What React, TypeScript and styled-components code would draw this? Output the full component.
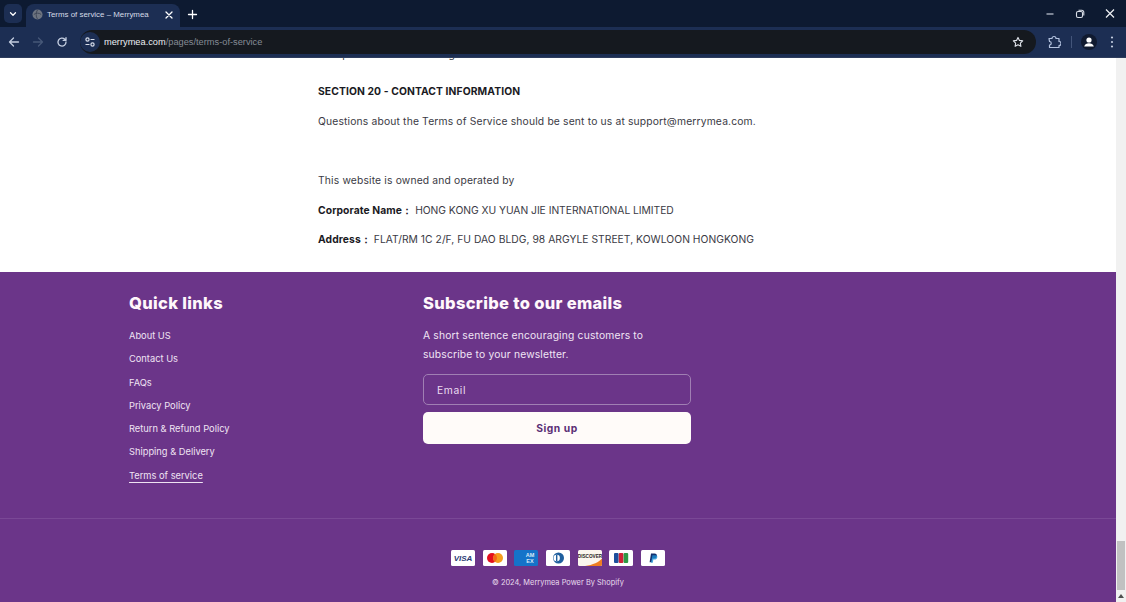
import React from "react";
import styled, { createGlobalStyle } from "styled-components";

const Global = createGlobalStyle`
  html, body { margin: 0; padding: 0; background: #fff; }
  body { font-family: "Inter", "Liberation Sans", sans-serif; overflow: hidden; }
  * { box-sizing: border-box; }
`;

const Frame = styled.div`
  width: 1126px; height: 602px; display: flex; flex-direction: column; overflow: hidden;
`;
const TabStrip = styled.div`
  height: 27px; background: #0d1a31; display: flex; align-items: flex-end; color: #fff; flex: none;
`;
const TabListButton = styled.div`
  width: 18px; height: 19px; margin: 0 4px 4px 4px; border-radius: 5px; background: #1c2e53;
  display: flex; align-items: center; justify-content: center; flex: none;
`;
const Tab = styled.div`
  width: 154px; height: 23px; background: #1c2e53; border-radius: 8px 8px 0 0; display: flex; align-items: center;
  padding: 0 6px 2px 6px; gap: 4px; font: 400 7.9px "Liberation Sans", sans-serif; color: #d5dbe7; flex: none;
`;
const TabTitle = styled.span`flex: 1; white-space: nowrap;`;
const NewTab = styled.div`
  width: 18px; height: 18px; margin: 0 0 4px 3px; display: flex; align-items: center; justify-content: center; flex: none;
`;
const StripSpacer = styled.div`flex: 1;`;
const WindowButtons = styled.div`
  display: flex; align-self: flex-start; height: 27px; align-items: center; padding-right: 8px; gap: 14px;
`;
const Toolbar = styled.div`
  height: 31px; flex: none; background: #1c2e53; display: flex; align-items: center; padding: 0 3px 0 2px;
  border-bottom: 1px solid #2d3c5c;
`;
const NavIcon = styled.div<{ $w?: number }>`
  width: ${(p) => p.$w ?? 24}px; height: 24px; display: flex; align-items: center; justify-content: center; flex: none;
`;
const Omnibox = styled.div`
  flex: 1; height: 24px; margin: 0 6px 0 6px; border-radius: 12px; background: #15191f; display: flex; align-items: center;
  padding-right: 5px;
`;
const SiteChip = styled.div`
  width: 20px; height: 20px; border-radius: 50%; background: #1c2e53; margin: 0 4px 0 0; display: flex; align-items: center; justify-content: center; flex: none;
`;
const Url = styled.div`
  flex: 1; font: 400 9.25px "Liberation Sans", sans-serif; color: #858c96; white-space: nowrap;
`;
const Host = styled.span`color: #eceef2;`;
const Divider = styled.div`width: 1px; height: 12px; background: #43557a; margin: 0 5px;`;

const Viewport = styled.div`flex: 1; display: flex; min-height: 0;`;
const Page = styled.div`flex: 1; display: flex; flex-direction: column; min-width: 0;`;
const Article = styled.div`
  height: 214px; flex: none; overflow: hidden; background: #fff; padding-left: 318px;
`;
const Para = styled.p<{ $gap: number }>`
  margin: ${(p) => p.$gap}px 0 0; white-space: nowrap; font: 400 10.3px/15px "Inter", sans-serif; letter-spacing: 0.165px; color: #3a3a44;
`;
const Clipped = styled(Para)`margin-top: -11px; height: 13px;`;
const SectionTitle = styled.p`
  margin: 24px 0 0; font: 700 10.3px/15px "Inter", sans-serif; letter-spacing: 0.11px; color: #1a1a23;
`;
const Strong = styled.strong`
  font-weight: 700; color: #1a1a23; margin-right: 3px; letter-spacing: .1px;
`;
const Caps = styled.span<{ $spacing: number }>`letter-spacing: ${(p) => p.$spacing}px;`;
const Footer = styled.footer`
  flex: 1; background: #6b3589; color: #f0e4f4; display: flex; flex-direction: column; padding-top: 21px;
`;
const Columns = styled.div`display: flex; padding-left: 129px; height: 226px; flex: none; border-bottom: 1px solid #7a4896;`;
const LinksCol = styled.div`width: 294px; flex: none;`;
const Heading = styled.h2`
  margin: 0; font: 800 16.5px/20px "Inter", sans-serif; letter-spacing: 0.33px; color: #fff7fb;
`;
const LinkList = styled.ul`list-style: none; margin: 15px 0 0; padding: 0; display: flex; flex-direction: column; gap: 8.3px;`;
const LinkItem = styled.li<{ $current?: boolean }>`
  font: 400 9.3px/15px "Inter", sans-serif; letter-spacing: 0; color: #efe3f3;
  span { text-decoration: ${(p) => (p.$current ? "underline" : "none")}; text-underline-offset: 3px; }
`;
const SubCol = styled.div`width: 268px; flex: none;`;
const Lead = styled.p`
  margin: 13px 0 0; font: 400 10.3px/19px "Inter", sans-serif; letter-spacing: .17px; color: #f0e4f4;
`;
const EmailField = styled.div`
  margin-top: 10px; height: 31px; border: 1px solid #a07fb3; border-radius: 5px; padding-left: 13px; display: flex; align-items: center;
  font: 400 10.3px "Inter", sans-serif; letter-spacing: .6px; color: #eadcf0;
`;
const SignUp = styled.div`
  margin-top: 7px; height: 32px; background: #fffbf9; border-radius: 5px; display: flex; align-items: center; justify-content: center;
  font: 700 10.3px "Inter", sans-serif; letter-spacing: .55px; color: #5b2e75;
`;
const Bottom = styled.div`display: flex; flex-direction: column; align-items: center; padding-top: 31px;`;
const Cards = styled.div`display: flex; gap: 7.7px; height: 17px;`;
const Copy = styled.div`
  margin-top: 10px; font: 400 7.4px/12px "Inter", sans-serif; letter-spacing: .03px; color: #e9dcee;
`;
const Scrollbar = styled.div`
  width: 10px; flex: none; background: #f1f1f1; display: flex; flex-direction: column; justify-content: flex-end;
`;
const Thumb = styled.div`height: 49px; margin: 0 1px; background: #c1c1c1;`;
const ScrollArrow = styled.div`height: 12px; display: flex; align-items: center; justify-content: center; background: #f1f1f1;`;

const Stroke = { fill: "none", stroke: "currentColor", strokeWidth: 1.3, strokeLinecap: "round", strokeLinejoin: "round" } as const;

const CardShell = ({ bg = "#fff", children }: { bg?: string; children: React.ReactNode }) => (
  <svg width="24" height="16" viewBox="0 0 24 16">
    <rect width="24" height="16" rx="1.5" fill={bg} />
    {children}
  </svg>
);

export default function App() {
  return (
    <Frame>
      <Global />
      <TabStrip>
        <TabListButton>
          <svg width="10" height="10" viewBox="0 0 10 10" {...Stroke} color="#fff"><path d="M2.5 3.8 5 6.3l2.5-2.5" /></svg>
        </TabListButton>
        <Tab>
          <svg width="11" height="11" viewBox="0 0 12 12"><circle cx="6" cy="6" r="5.5" fill="#6d7480" /><path d="M2 6c2-2 6-2 8 0M6 1c-2 3-2 7 0 10" stroke="#3c4454" fill="none" /></svg>
          <TabTitle>Terms of service – Merrymea</TabTitle>
          <svg width="10" height="10" viewBox="0 0 10 10" {...Stroke} color="#fff"><path d="m2 2 6 6M8 2 2 8" /></svg>
        </Tab>
        <NewTab>
          <svg width="11" height="11" viewBox="0 0 11 11" {...Stroke} color="#fff"><path d="M5.5 1.5v8M1.5 5.5h8" /></svg>
        </NewTab>
        <StripSpacer />
        <WindowButtons>
          <svg width="16" height="12" viewBox="0 0 16 12" fill="none" stroke="#d8dde6" strokeWidth="1.1"><path d="M4.5 6h7" /></svg>
          <svg width="16" height="12" viewBox="0 0 16 12" fill="none" stroke="#d8dde6" strokeWidth="1.1"><rect x="4.5" y="3.5" width="6" height="6" rx="1.5" /><path d="M6.5 2.2h3.3a2 2 0 0 1 2 2v3.3" /></svg>
          <svg width="16" height="12" viewBox="0 0 16 12" fill="none" stroke="#eef0f4" strokeWidth="1.2"><path d="m4 1.5 8 8M12 1.5l-8 8" /></svg>
        </WindowButtons>
      </TabStrip>
      <Toolbar>
        <NavIcon>
          <svg width="12" height="12" viewBox="0 0 12 12" {...Stroke} color="#c3cde0"><path d="M10.5 6h-9M5.5 2 1.5 6l4 4" /></svg>
        </NavIcon>
        <NavIcon>
          <svg width="12" height="12" viewBox="0 0 12 12" {...Stroke} color="#465878"><path d="M1.5 6h9M6.5 2l4 4-4 4" /></svg>
        </NavIcon>
        <NavIcon>
          <svg width="12" height="12" viewBox="0 0 12 12" {...Stroke} color="#c3cde0"><path d="M10 6a4 4 0 1 1-1.2-2.8L10 4.4M10 1.6v2.8H7.2" /></svg>
        </NavIcon>
        <Omnibox>
          <SiteChip>
            <svg width="12" height="12" viewBox="0 0 12 12" fill="none" stroke="#d8deea" strokeWidth="1.2"><circle cx="3.5" cy="3.5" r="1.6" /><path d="M6.5 3.5h4M1.5 8.5h4" /><circle cx="8.5" cy="8.5" r="1.6" /></svg>
          </SiteChip>
          <Url><Host>merrymea.com</Host>/pages/terms-of-service</Url>
          <NavIcon $w={26}>
            <svg width="12" height="12" viewBox="0 0 24 24" fill="none" stroke="#dfe3ea" strokeWidth="2.2" strokeLinejoin="round"><path d="m12 2.8 2.9 6 6.5.9-4.7 4.5 1.1 6.5L12 17.6l-5.8 3.1 1.1-6.5L2.6 9.7l6.5-.9z" /></svg>
          </NavIcon>
        </Omnibox>
        <NavIcon>
          <svg width="14" height="14" viewBox="0 0 14 14" fill="none" stroke="#b4c3e0" strokeWidth="1.2" strokeLinejoin="round"><path d="M2 3.5h3a2 2 0 0 1 4 0h3v3a2 2 0 0 1 0 4v2H2.5v-2.5a1.5 1.5 0 0 0 0-3.5z" /></svg>
        </NavIcon>
        <Divider />
        <NavIcon $w={24}>
          <svg width="16" height="16" viewBox="0 0 16 16"><circle cx="8" cy="8" r="8" fill="#101a2f" /><circle cx="8" cy="6" r="2.6" fill="#fff" /><path d="M3.2 12.5c.6-2.4 2.6-3.2 4.8-3.2s4.2.8 4.8 3.2z" fill="#fff" /></svg>
        </NavIcon>
        <NavIcon $w={22}>
          <svg width="12" height="14" viewBox="0 0 12 14" fill="#c3cde0"><circle cx="6" cy="2.5" r="1.1" /><circle cx="6" cy="7" r="1.1" /><circle cx="6" cy="11.5" r="1.1" /></svg>
        </NavIcon>
      </Toolbar>
      <Viewport>
        <Page>
          <Article>
            <Clipped $gap={0}>acceptance of those changes.</Clipped>
            <SectionTitle>SECTION 20 - CONTACT INFORMATION</SectionTitle>
            <Para $gap={15}>Questions about the Terms of Service should be sent to us at support@merrymea.com.</Para>
            <Para $gap={44}>This website is owned and operated by</Para>
            <Para $gap={14.7}><Strong>Corporate Name：</Strong><Caps $spacing={-0.03}>HONG KONG XU YUAN JIE INTERNATIONAL LIMITED</Caps></Para>
            <Para $gap={14.7}><Strong>Address：</Strong><Caps $spacing={0.03}>FLAT/RM 1C 2/F, FU DAO BLDG, 98 ARGYLE STREET, KOWLOON HONGKONG</Caps></Para>
          </Article>
          <Footer>
            <Columns>
              <LinksCol>
                <Heading>Quick links</Heading>
                <LinkList>
                  <LinkItem><span>About US</span></LinkItem>
                  <LinkItem><span>Contact Us</span></LinkItem>
                  <LinkItem><span>FAQs</span></LinkItem>
                  <LinkItem><span>Privacy Policy</span></LinkItem>
                  <LinkItem><span>Return &amp; Refund Policy</span></LinkItem>
                  <LinkItem><span>Shipping &amp; Delivery</span></LinkItem>
                  <LinkItem $current><span>Terms of service</span></LinkItem>
                </LinkList>
              </LinksCol>
              <SubCol>
                <Heading>Subscribe to our emails</Heading>
                <Lead>A short sentence encouraging customers to<br />subscribe to your newsletter.</Lead>
                <EmailField>Email</EmailField>
                <SignUp>Sign up</SignUp>
              </SubCol>
            </Columns>
            <Bottom>
              <Cards>
                <CardShell>
                  <text x="12" y="11" textAnchor="middle" fontFamily="Liberation Sans, sans-serif" fontWeight="700" fontStyle="italic" fontSize="8" fill="#2a3a73">VISA</text>
                </CardShell>
                <CardShell>
                  <circle cx="9" cy="8" r="5" fill="#e3101e" /><circle cx="15" cy="8" r="5" fill="#f59e1c" /><path d="M12 4a5 5 0 0 1 0 8 5 5 0 0 1 0-8z" fill="#f26a1b" />
                </CardShell>
                <CardShell bg="#1573c9">
                  <text x="16" y="7" textAnchor="middle" fontFamily="Liberation Sans, sans-serif" fontWeight="700" fontSize="5.5" fill="#dbe9f7">AM</text>
                  <text x="16" y="13" textAnchor="middle" fontFamily="Liberation Sans, sans-serif" fontWeight="700" fontSize="5.5" fill="#dbe9f7">EX</text>
                </CardShell>
                <CardShell>
                  <circle cx="12.5" cy="8" r="5.5" fill="#1f5f9e" /><circle cx="10.7" cy="8" r="3.2" fill="#fff" /><rect x="10" y="5" width="1.4" height="6" fill="#1f5f9e" />
                </CardShell>
                <CardShell bg="#fbf6ee">
                  <path d="M24 8.5V14.5a1.5 1.5 0 0 1-1.5 1.5H7C15 15 21 12 24 8.5z" fill="#ee7d21" />
                  <text x="12" y="7.5" textAnchor="middle" fontFamily="Liberation Sans, sans-serif" fontWeight="700" fontSize="4.7" fill="#2a2522">DISCOVER</text>
                </CardShell>
                <CardShell>
                  <rect x="5" y="3" width="4.6" height="10" rx="1.1" fill="#1d4f9c" /><rect x="9.8" y="3" width="4.6" height="10" rx="1.1" fill="#cf2338" /><rect x="14.6" y="3" width="4.6" height="10" rx="1.1" fill="#2e9a45" />
                </CardShell>
                <CardShell>
                  <path d="M10 3.5h3.5c1.8 0 2.6 1 2.3 2.5-.3 1.7-1.5 2.5-3.2 2.5h-1.4l-.6 3.7H8.6z" fill="#13316f" /><path d="M11.4 5.2h3.1c1.4 0 2 .8 1.8 2-.3 1.5-1.3 2.3-2.8 2.3h-1.2l-.5 3.2H10z" fill="#1b8fd2" opacity=".8" />
                </CardShell>
              </Cards>
              <Copy>© 2024, Merrymea Power By Shopify</Copy>
            </Bottom>
          </Footer>
        </Page>
        <Scrollbar>
          <Thumb />
          <ScrollArrow>
            <svg width="6" height="4" viewBox="0 0 6 4" fill="#505050"><path d="M3 0 6 4H0z" /></svg>
          </ScrollArrow>
        </Scrollbar>
      </Viewport>
    </Frame>
  );
}
